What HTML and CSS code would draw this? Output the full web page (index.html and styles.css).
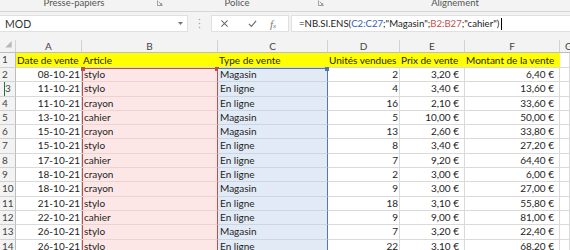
FILE: index.html
```html
<!DOCTYPE html>
<html lang="fr">
<head>
    <meta charset="UTF-8">
    <title>Ventes - NB.SI.ENS</title>
    <link rel="stylesheet" href="styles.css">
</head>
<body>
    <div class="ribbon">
        <div class="group g1">
            <span class="group-label">Presse-papiers</span>
            <svg class="launcher" viewBox="0 0 7 7"><path d="M0.5 0.5v6h6" fill="none" stroke="#8a8a8a"/><path d="M2 2l3.5 3.5M3.5 5.5h2v-2" fill="none" stroke="#8a8a8a"/></svg>
        </div>
        <div class="group g2">
            <span class="group-label">Police</span>
            <svg class="launcher" viewBox="0 0 7 7"><path d="M0.5 0.5v6h6" fill="none" stroke="#8a8a8a"/><path d="M2 2l3.5 3.5M3.5 5.5h2v-2" fill="none" stroke="#8a8a8a"/></svg>
        </div>
        <div class="group g3">
            <span class="group-label">Alignement</span>
        </div>
    </div>

    <div class="formula-area">
        <div class="name-box">
            <span>MOD</span>
            <svg class="drop" viewBox="0 0 5 3"><path d="M0 0h5l-2.5 3z" fill="#777"/></svg>
        </div>
        <div class="grip">
            <svg viewBox="0 0 3 11"><circle cx="1.5" cy="1.5" r="0.8" fill="#aaa"/><circle cx="1.5" cy="5.5" r="0.8" fill="#aaa"/><circle cx="1.5" cy="9.5" r="0.8" fill="#aaa"/></svg>
        </div>
        <div class="fx-box">
            <svg class="fx-icon cancel" viewBox="0 0 10 10"><path d="M1.5 1.5l7 7M8.5 1.5l-7 7" stroke="#6e6e6e" stroke-width="1.2"/></svg>
            <svg class="fx-icon enter" viewBox="0 0 10 10"><path d="M1 5.5l2.8 2.8L9 2" fill="none" stroke="#6e6e6e" stroke-width="1.3"/></svg>
            <span class="fx-label">f<small>x</small></span>
        </div>
        <div class="formula-input">=NB.SI.ENS(<span class="ref-blue">C2:C27</span>;"Magasin";<span class="ref-red">B2:B27</span>;"cahier")<span class="caret"></span></div>
    </div>

    <div class="sheet">
        <div class="hd corner"><svg viewBox="0 0 16 13"><path d="M12 1v7H5z" fill="#b9b9b9"/></svg></div>
        <div class="hd">A</div>
        <div class="hd">B</div>
        <div class="hd">C</div>
        <div class="hd">D</div>
        <div class="hd">E</div>
        <div class="hd">F</div>
        <div class="hd hd-g">G</div>

        <div class="rh">1</div>
        <div class="c yl">Date de vente</div>
        <div class="c yl">Article</div>
        <div class="c yl">Type de vente</div>
        <div class="c yl">Unités vendues</div>
        <div class="c yl">Prix de vente</div>
        <div class="c yl">Montant de la vente</div>
        <div class="c"></div>

        <div class="rh">2</div>
        <div class="c num">08-10-21</div>
        <div class="c rb top">stylo<span class="handle h-left"></span><span class="handle h-right"></span></div>
        <div class="c rc top">Magasin<span class="handle h-right blue"></span></div>
        <div class="c num">2</div>
        <div class="c eur">3,20 €</div>
        <div class="c eur">6,40 €</div>
        <div class="c"></div>

        <div class="rh active">3</div>
        <div class="c num">11-10-21</div>
        <div class="c rb">stylo</div>
        <div class="c rc">En ligne</div>
        <div class="c num">4</div>
        <div class="c eur">3,40 €</div>
        <div class="c eur">13,60 €</div>
        <div class="c"></div>

        <div class="rh">4</div>
        <div class="c num">11-10-21</div>
        <div class="c rb">crayon</div>
        <div class="c rc">En ligne</div>
        <div class="c num">16</div>
        <div class="c eur">2,10 €</div>
        <div class="c eur">33,60 €</div>
        <div class="c"></div>

        <div class="rh">5</div>
        <div class="c num">13-10-21</div>
        <div class="c rb">cahier</div>
        <div class="c rc">Magasin</div>
        <div class="c num">5</div>
        <div class="c eur">10,00 €</div>
        <div class="c eur">50,00 €</div>
        <div class="c"></div>

        <div class="rh">6</div>
        <div class="c num">15-10-21</div>
        <div class="c rb">crayon</div>
        <div class="c rc">Magasin</div>
        <div class="c num">13</div>
        <div class="c eur">2,60 €</div>
        <div class="c eur">33,80 €</div>
        <div class="c"></div>

        <div class="rh">7</div>
        <div class="c num">15-10-21</div>
        <div class="c rb">stylo</div>
        <div class="c rc">En ligne</div>
        <div class="c num">8</div>
        <div class="c eur">3,40 €</div>
        <div class="c eur">27,20 €</div>
        <div class="c"></div>

        <div class="rh">8</div>
        <div class="c num">17-10-21</div>
        <div class="c rb">cahier</div>
        <div class="c rc">En ligne</div>
        <div class="c num">7</div>
        <div class="c eur">9,20 €</div>
        <div class="c eur">64,40 €</div>
        <div class="c"></div>

        <div class="rh">9</div>
        <div class="c num">18-10-21</div>
        <div class="c rb">crayon</div>
        <div class="c rc">En ligne</div>
        <div class="c num">2</div>
        <div class="c eur">3,00 €</div>
        <div class="c eur">6,00 €</div>
        <div class="c"></div>

        <div class="rh">10</div>
        <div class="c num">18-10-21</div>
        <div class="c rb">crayon</div>
        <div class="c rc">Magasin</div>
        <div class="c num">9</div>
        <div class="c eur">3,00 €</div>
        <div class="c eur">27,00 €</div>
        <div class="c"></div>

        <div class="rh">11</div>
        <div class="c num">21-10-21</div>
        <div class="c rb">stylo</div>
        <div class="c rc">En ligne</div>
        <div class="c num">18</div>
        <div class="c eur">3,10 €</div>
        <div class="c eur">55,80 €</div>
        <div class="c"></div>

        <div class="rh">12</div>
        <div class="c num">22-10-21</div>
        <div class="c rb">cahier</div>
        <div class="c rc">En ligne</div>
        <div class="c num">9</div>
        <div class="c eur">9,00 €</div>
        <div class="c eur">81,00 €</div>
        <div class="c"></div>

        <div class="rh">13</div>
        <div class="c num">26-10-21</div>
        <div class="c rb">stylo</div>
        <div class="c rc">Magasin</div>
        <div class="c num">7</div>
        <div class="c eur">3,20 €</div>
        <div class="c eur">22,40 €</div>
        <div class="c"></div>

        <div class="rh">14</div>
        <div class="c num">26-10-21</div>
        <div class="c rb">stylo</div>
        <div class="c rc">En ligne</div>
        <div class="c num">22</div>
        <div class="c eur">3,10 €</div>
        <div class="c eur">68,20 €</div>
        <div class="c"></div>
    </div>
</body>
</html>
```

FILE: styles.css
```css
* {
    box-sizing: border-box;
}

body {
    margin: 0;
    width: 570px;
    height: 250px;
    overflow: hidden;
    background: #fff;
    font-family: Lato, 'Liberation Sans', sans-serif;
    color: #1e1e1e;
}

/* ribbon group labels (cut at the top) */
.ribbon {
    height: 12px;
    background: #f3f3f3;
    border-bottom: 1px solid #d6d6d6;
    display: flex;
    overflow: hidden;
    font-size: 9.5px;
    color: #555;
}

.group {
    display: flex;
    align-items: flex-start;
}

.group-label {
    text-align: center;
    line-height: 10px;
    margin-top: -2px;
}

.g1 .group-label {
    width: 148px;
}

.g2 {
    margin-left: 4px;
}

.g2 .group-label {
    width: 140px;
}

.g3 {
    margin-left: 4px;
}

.g3 .group-label {
    width: 254px;
}

.launcher {
    width: 6px;
    height: 6px;
    margin-left: 9px;
}

.g2 .launcher {
    margin-left: 11px;
}

/* formula bar */
.formula-area {
    display: flex;
    height: 28px;
    padding: 3px 0 8px;
    background: #f3f3f3;
}

.name-box {
    width: 188px;
    background: #fff;
    border: 1px solid #e0e0e0;
    border-left: none;
    display: flex;
    align-items: center;
    justify-content: space-between;
    padding: 0 4px 0 5px;
    font-size: 10.5px;
    color: #333;
}

.drop {
    width: 5px;
    height: 3px;
}

.grip {
    width: 23px;
    display: flex;
    align-items: center;
    justify-content: center;
}

.grip svg {
    width: 3px;
    height: 11px;
}

.fx-box {
    width: 78px;
    margin-right: 2px;
    background: #fff;
    border: 1px solid #e0e0e0;
    display: flex;
    align-items: center;
    padding-left: 8px;
}

.fx-icon {
    width: 9px;
    height: 9px;
}

.enter {
    margin-left: 19px;
}

.fx-label {
    margin-left: 13px;
    font-family: 'Liberation Serif', serif;
    font-style: italic;
    font-size: 11px;
    color: #777;
}

.fx-label small {
    font-size: 7px;
}

.formula-input {
    flex: 1;
    background: #fff;
    border: 1px solid #e0e0e0;
    border-right: none;
    padding-left: 7px;
    font-size: 9.6px;
    line-height: 15px;
    white-space: nowrap;
    color: #222;
    display: flex;
    align-items: center;
}

.ref-blue {
    color: #2f62b8;
}

.ref-red {
    color: #c0504d;
}

.caret {
    display: inline-block;
    width: 1px;
    height: 12px;
    margin-left: 2px;
    background: #000;
}

/* grid */
.sheet {
    display: grid;
    grid-template-columns: 16px 66px 136px 110px 72px 65px 95px 10px;
    grid-template-rows: 13px 15px repeat(13, 14.3px);
    font-size: 10px;
}

.hd {
    background: #f3f3f3;
    color: #444;
    font-size: 10px;
    text-align: center;
    line-height: 12px;
    border-right: 1px solid #d2d2d2;
    border-bottom: 1px solid #bdbdbd;
}

.hd-g {
    text-align: left;
    padding-left: 5px;
    border-right: none;
}

.corner svg {
    width: 16px;
    height: 12px;
    display: block;
}

.rh {
    background: #f3f3f3;
    color: #444;
    font-size: 10px;
    line-height: 13px;
    padding-left: 2px;
    border-right: 1px solid #bdbdbd;
    border-bottom: 1px solid #d2d2d2;
}

.rh.active {
    padding-left: 5px;
    box-shadow: inset 4px 0 0 #f3f3f3, inset 5px 0 0 #217346;
}

.c {
    position: relative;
    padding: 0 2px;
    line-height: 13px;
    white-space: nowrap;
    border-right: 1px solid #dadada;
    border-bottom: 1px solid #dadada;
}

.yl {
    background: #ffff00;
    border-right-color: #ffff00;
    padding-left: 1px;
    line-height: 14px;
}

.num {
    text-align: right;
    padding-right: 1px;
}

.eur {
    text-align: right;
    padding-right: 5px;
}

/* referenced ranges while editing the formula */
.rb {
    background: #fce6e6;
    border-right-color: #b9524c;
    border-bottom-color: #ecd2d2;
    box-shadow: inset 1px 0 0 #b9524c;
}

.rc {
    background: #e2eaf5;
    border-right-color: #5277b0;
    border-bottom-color: #cbd6e4;
}

.rb.top {
    box-shadow: inset 1px 0 0 #b9524c, inset 0 1px 0 #b9524c;
}

.rc.top {
    box-shadow: inset 0 1px 0 #5277b0;
}

.handle {
    position: absolute;
    top: -1px;
    width: 4px;
    height: 4px;
    background: #b9524c;
}

.h-left {
    left: -1px;
}

.h-right {
    right: -2px;
}

.handle.blue {
    background: #5277b0;
}
```
